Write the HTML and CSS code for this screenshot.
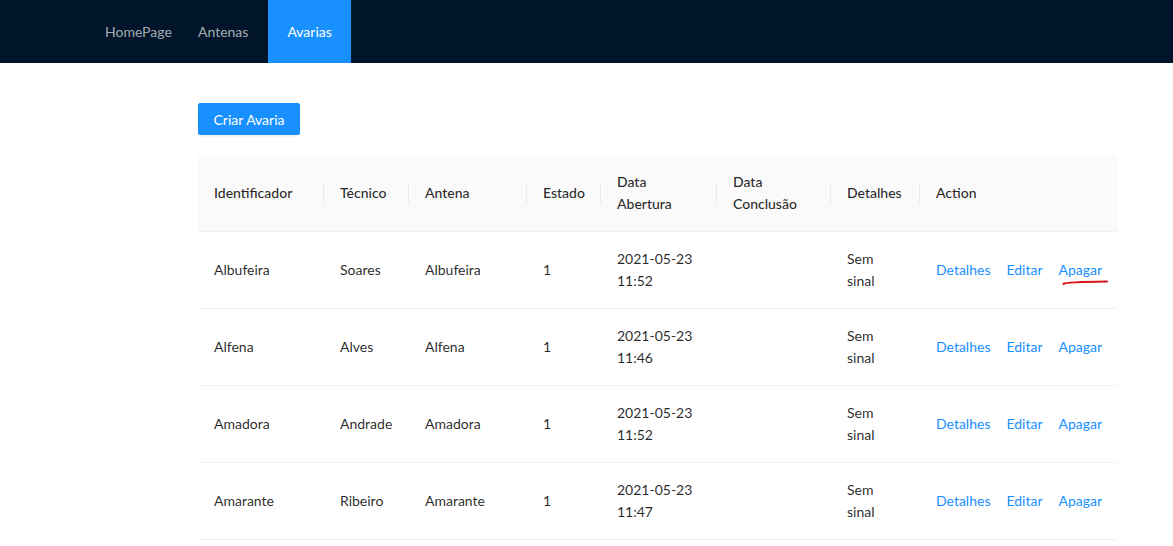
FILE: index.html
```html
<!DOCTYPE html>
<html lang="pt">
<head>
<meta charset="utf-8">
<title>Avarias</title>
<link rel="stylesheet" href="styles.css">
</head>
<body>
<header class="header">
  <a class="brand" href="#">HomePage</a>
  <nav class="menu">
    <a class="menu-item" href="#">Antenas</a>
    <a class="menu-item active" href="#">Avarias</a>
  </nav>
</header>
<main class="content">
  <button class="btn-primary" type="button">Criar Avaria</button>
  <table class="table">
    <colgroup>
      <col class="c1"><col class="c2"><col class="c3"><col class="c4"><col class="c5"><col class="c6"><col class="c7"><col class="c8">
    </colgroup>
    <thead>
      <tr>
        <th>Identificador</th>
        <th class="sep">Técnico</th>
        <th class="sep">Antena</th>
        <th class="sep">Estado</th>
        <th class="sep">Data<br>Abertura</th>
        <th class="sep">Data<br>Conclusão</th>
        <th class="sep">Detalhes</th>
        <th class="sep">Action</th>
      </tr>
    </thead>
    <tbody>
      <tr>
        <td>Albufeira</td><td>Soares</td><td>Albufeira</td><td>1</td><td>2021-05-23<br>11:52</td><td></td><td>Sem<br>sinal</td>
        <td><div class="actions"><a href="#">Detalhes</a><a href="#">Editar</a><a href="#" class="marked">Apagar<svg class="scribble" width="48" height="8" viewBox="0 0 48 8"><path d="M1.5 5.8 C 3 4.5, 20 3.8, 45 3.5" stroke="#d9141c" stroke-width="2.2" fill="none" stroke-linecap="round"/></svg></a></div></td>
      </tr>
      <tr>
        <td>Alfena</td><td>Alves</td><td>Alfena</td><td>1</td><td>2021-05-23<br>11:46</td><td></td><td>Sem<br>sinal</td>
        <td><div class="actions"><a href="#">Detalhes</a><a href="#">Editar</a><a href="#">Apagar</a></div></td>
      </tr>
      <tr>
        <td>Amadora</td><td>Andrade</td><td>Amadora</td><td>1</td><td>2021-05-23<br>11:52</td><td></td><td>Sem<br>sinal</td>
        <td><div class="actions"><a href="#">Detalhes</a><a href="#">Editar</a><a href="#">Apagar</a></div></td>
      </tr>
      <tr>
        <td>Amarante</td><td>Ribeiro</td><td>Amarante</td><td>1</td><td>2021-05-23<br>11:47</td><td></td><td>Sem<br>sinal</td>
        <td><div class="actions"><a href="#">Detalhes</a><a href="#">Editar</a><a href="#">Apagar</a></div></td>
      </tr>
    </tbody>
  </table>
</main>
</body>
</html>
```
FILE: styles.css
```css
* { box-sizing: border-box; }
html, body { margin: 0; padding: 0; background: #fff; }
body {
  font-family: Lato, "Noto Sans", sans-serif;
  font-size: 14px;
  line-height: 22px;
  color: rgba(0,0,0,.85);
}
a { text-decoration: none; }
.header {
  height: 63px;
  background: #001529;
  display: flex;
  align-items: stretch;
  padding-left: 105px;
}
.brand {
  display: flex;
  align-items: center;
  color: rgba(255,255,255,.65);
  width: 73px;
}
.menu { display: flex; }
.menu-item {
  display: flex;
  align-items: center;
  padding: 0 20px;
  color: rgba(255,255,255,.65);
}
.menu-item.active { background: #1890ff; color: #fff; padding: 0 19px; }
.content {
  padding: 40px 0 0 198px;
}
.btn-primary {
  font-family: inherit;
  font-size: 14px;
  height: 32px;
  width: 102px;
  padding: 0;
  border: 1px solid #1890ff;
  background: #1890ff;
  color: #fff;
  border-radius: 2px;
  box-shadow: 0 2px 0 rgba(0,0,0,.045);
  display: block;
  margin-bottom: 20px;
}
.table {
  width: 919px;
  border-collapse: collapse;
  table-layout: fixed;
}
.c1 { width: 126px; }
.c2 { width: 85px; }
.c3 { width: 118px; }
.c4 { width: 74px; }
.c5 { width: 116px; }
.c6 { width: 114px; }
.c7 { width: 89px; }
.c8 { width: 197px; }
.table th, .table td {
  padding: 16px;
  text-align: left;
  vertical-align: middle;
  border-bottom: 1px solid #f0f0f0;
}
.table th {
  background: #fafafa;
  font-weight: 500;
  position: relative;
  height: 76px;
}
.table td { height: 77px; }
.table th.sep::before {
  content: "";
  position: absolute;
  left: -1px;
  top: 50%;
  transform: translateY(-50%);
  width: 1px;
  height: 22px;
  background: rgba(0,0,0,.06);
}
.actions { display: flex; gap: 16px; }
.actions a { color: #1890ff; position: relative; }
.scribble {
  position: absolute;
  left: 3px;
  top: 19px;
}
```
